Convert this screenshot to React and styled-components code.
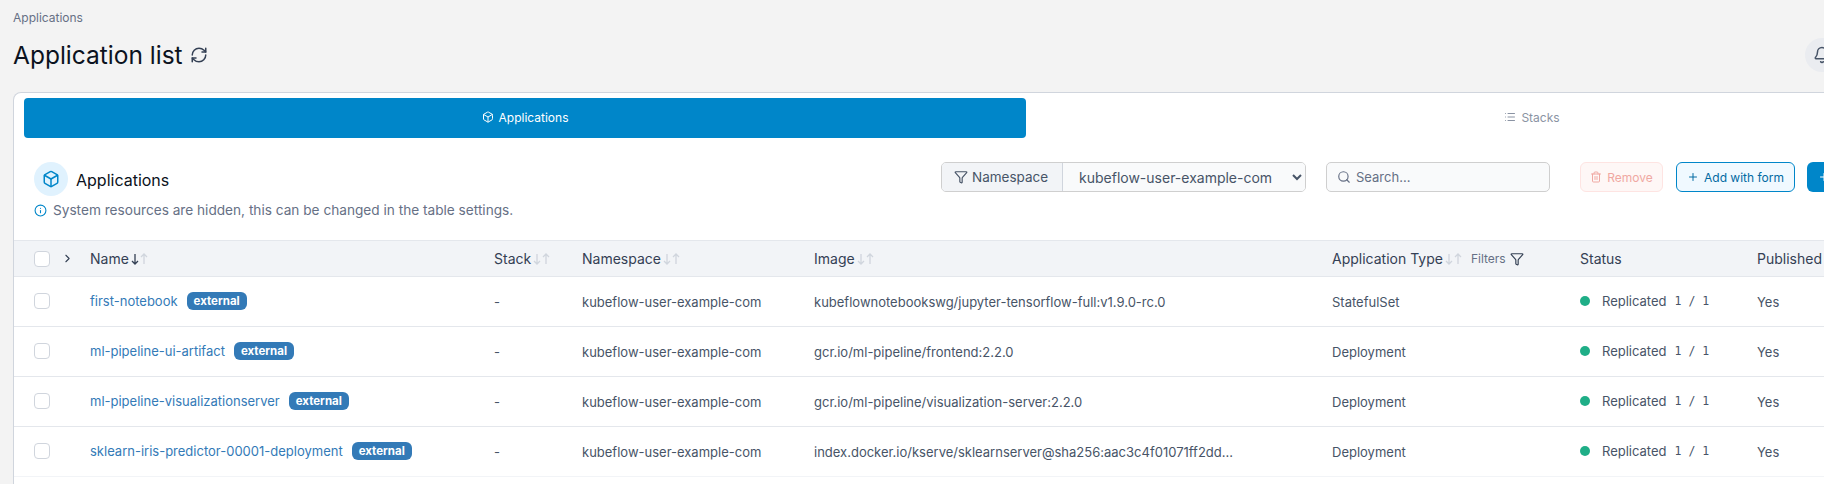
import React from 'react';
import styled, { createGlobalStyle } from 'styled-components';
import {
    Bell, Box, ChevronRight, Filter, Info, List, Plus, RefreshCw, Search, Trash2,
} from 'lucide-react';

const GlobalStyle = createGlobalStyle`
    html, body {
        margin: 0;
        height: 484px;
        overflow: hidden;
        background: #f3f3f3;
        font-family: Inter, "Liberation Sans", sans-serif;
    }
`;

const Page = styled.div`
    width: 2060px;
    height: 484px;
    padding: 10px 0 0 13px;
    box-sizing: border-box;
    overflow: hidden;
`;

const Breadcrumb = styled.div`
    font-size: 12px;
    line-height: 16px;
    color: #667085;
`;

const TitleRow = styled.div`
    display: flex;
    align-items: center;
    height: 34px;
    margin: 12px 0 20px;
`;

const Title = styled.h1`
    flex: 0 0 1792px;
    display: flex;
    align-items: center;
    gap: 7px;
    margin: 0;
    font-size: 24.5px;
    font-weight: 400;
    color: #0b1220;
    svg {
        color: #344054;
    }
`;

const BellButton = styled.div`
    flex: none;
    display: flex;
    align-items: center;
    justify-content: center;
    width: 34px;
    height: 34px;
    border-radius: 50%;
    background: #eaecf0;
    color: #475467;
`;

const Card = styled.div`
    width: 2040px;
    height: 420px;
    box-sizing: border-box;
    background: #fff;
    border: 1px solid #d0d5dd;
    border-bottom: none;
    border-radius: 8px 8px 0 0;
    padding-top: 5px;
`;

const Tabs = styled.div`
    display: flex;
    gap: 5px;
    padding: 0 10px;
`;

const Tab = styled.div`
    flex: 0 0 1002px;
    height: 40px;
    padding-bottom: 2px;
    box-sizing: border-box;
    display: flex;
    align-items: center;
    justify-content: center;
    gap: 5px;
    border-radius: 4px;
    font-size: 12px;
    color: ${({ $active }) => ($active ? '#fff' : '#8a93a3')};
    background: ${({ $active }) => ($active ? '#0086c9' : 'transparent')};
`;

const Toolbar = styled.div`
    display: flex;
    height: 102px;
    padding: 24px 0 0 20px;
    box-sizing: border-box;
`;

const Heading = styled.div`
    flex: 0 0 907px;
`;

const HeadingTitle = styled.div`
    display: flex;
    align-items: center;
    gap: 8px;
    font-size: 16px;
    line-height: 20px;
    color: #0b1220;
`;

const HeadingLabel = styled.span`
    padding-top: 2px;
`;

const IconCircle = styled.div`
    display: flex;
    align-items: center;
    justify-content: center;
    width: 34px;
    height: 34px;
    border-radius: 50%;
    background: #e0f2fe;
    color: #0086c9;
`;

const HeadingNote = styled.div`
    display: flex;
    align-items: center;
    gap: 6px;
    margin-top: 6px;
    font-size: 13.65px;
    line-height: 16px;
    color: #667085;
    svg {
        color: #0086c9;
    }
`;

const Controls = styled.div`
    display: flex;
    align-items: flex-start;
`;

const InputGroup = styled.div`
    display: flex;
    width: 365px;
    height: 30px;
    box-sizing: border-box;
    border: 1px solid #cfcfcf;
    border-radius: 5px;
    overflow: hidden;
    background: #f9fafb;
`;

const GroupAddon = styled.div`
    flex: 0 0 121px;
    display: flex;
    align-items: center;
    gap: 4px;
    padding-left: 12px;
    box-sizing: border-box;
    background: #f2f4f7;
    border-right: 1px solid #d0d5dd;
    font-size: 13.5px;
    color: #475467;
`;

const NamespaceSelect = styled.select`
    flex: 1;
    min-width: 0;
    border: none;
    outline: none;
    padding: 0 8px 0 12px;
    background: #f9fafb;
    font-family: inherit;
    font-size: 14px;
    color: #475467;
`;

const SearchBox = styled.div`
    display: flex;
    align-items: center;
    gap: 5px;
    width: 224px;
    height: 30px;
    margin-left: 20px;
    padding-left: 10px;
    box-sizing: border-box;
    border: 1px solid #cfcfcf;
    border-radius: 5px;
    background: #f9fafb;
    font-size: 13px;
    color: #667085;
`;

const Button = styled.div`
    flex: none;
    display: flex;
    align-items: center;
    justify-content: center;
    gap: 5px;
    height: 30px;
    box-sizing: border-box;
    border-radius: 6px;
    font-size: 12px;
    white-space: nowrap;
`;

const RemoveButton = styled(Button)`
    width: 83px;
    margin-left: 30px;
    border: 1px solid #fee4e2;
    background: #fef7f6;
    color: #f0a8a2;
`;

const AddButton = styled(Button)`
    width: 119px;
    margin-left: 13px;
    border: 1px solid #0086c9;
    background: #f0f9ff;
    color: #026aa2;
`;

const CreateButton = styled(Button)`
    width: 150px;
    margin-left: 12px;
    padding-left: 11px;
    justify-content: flex-start;
    background: #0086c9;
    color: #fff;
`;

const Row = styled.div`
    display: grid;
    grid-template-columns: 27px 29px 404px 88px 232px 518px 248px 177px 1fr;
    align-items: center;
    padding-left: 20px;
    box-sizing: border-box;
    height: ${({ $header }) => ($header ? '37px' : '50px')};
    border-top: ${({ $header }) => ($header ? '1px solid #e4e7ec' : 'none')};
    border-bottom: 1px solid ${({ $last }) => ($last ? '#f2f4f7' : '#e4e7ec')};
    background: ${({ $header }) => ($header ? '#f2f4f7' : '#fff')};
    font-size: 13px;
    color: #475467;
`;

const Checkbox = styled.span`
    display: block;
    width: 16px;
    height: 16px;
    margin-top: ${({ $header }) => ($header ? '0' : '-2px')};
    box-sizing: border-box;
    border: 1px solid #d0d5dd;
    border-radius: 4px;
    background: #fff;
`;

const HeaderCell = styled.div`
    display: flex;
    align-items: center;
    font-size: 14px;
    color: #344054;
`;

const SortArrows = styled.span`
    display: inline-flex;
    gap: 1px;
    margin-left: 2px;
`;

const FiltersLabel = styled.span`
    display: inline-flex;
    align-items: center;
    gap: 4px;
    margin-left: 9px;
    font-size: 12px;
    color: #667085;
    svg {
        color: #344054;
    }
`;

const NameCell = styled.div`
    display: flex;
    align-items: center;
    gap: 9px;
    margin-top: -2px;
`;

const AppLink = styled.span`
    color: #337ab7;
`;

const ExternalBadge = styled.span`
    padding: 0 7px;
    height: 18px;
    line-height: 18px;
    border-radius: 6px;
    background: #337ab7;
    color: #fff;
    font-size: 11.5px;
    font-weight: 700;
`;

const StatusCell = styled.div`
    display: flex;
    align-items: center;
    gap: 12px;
    margin-top: -2px;
`;

const StatusDot = styled.span`
    width: 10px;
    height: 10px;
    border-radius: 50%;
    background: #1fae87;
`;

const Replicas = styled.span`
    margin-left: -4px;
    font-family: "DejaVu Sans Mono", "Liberation Mono", monospace;
    font-size: 11.5px;
    white-space: pre;
`;

const applications = [
    { name: 'first-notebook', image: 'kubeflownotebookswg/jupyter-tensorflow-full:v1.9.0-rc.0', type: 'StatefulSet' },
    { name: 'ml-pipeline-ui-artifact', image: 'gcr.io/ml-pipeline/frontend:2.2.0', type: 'Deployment' },
    { name: 'ml-pipeline-visualizationserver', image: 'gcr.io/ml-pipeline/visualization-server:2.2.0', type: 'Deployment' },
    { name: 'sklearn-iris-predictor-00001-deployment', image: 'index.docker.io/kserve/sklearnserver@sha256:aac3c4f01071ff2dd...', type: 'Deployment' },
];

// Narrow sort arrows, lucide's are too wide for their height here
function SortArrow({ up, color }) {
    return (
        <svg width="8" height="12" viewBox="0 0 8 12" fill="none" stroke={color} strokeWidth="1.3">
            <path d={up ? 'M4 11V1M1 4l3-3 3 3' : 'M4 1v10M1 8l3 3 3-3'} />
        </svg>
    );
}

function Sort({ active }) {
    return (
        <SortArrows>
            <SortArrow color={active ? '#344054' : '#d0d5dd'} />
            <SortArrow up color="#d0d5dd" />
        </SortArrows>
    );
}

export default function App() {
    return (
        <Page>
            <GlobalStyle />
            <Breadcrumb>Applications</Breadcrumb>
            <TitleRow>
                <Title>
                    Application list
                    <RefreshCw size={18} />
                </Title>
                <BellButton>
                    <Bell size={18} />
                </BellButton>
            </TitleRow>
            <Card>
                <Tabs>
                    <Tab $active>
                        <Box size={12} />
                        Applications
                    </Tab>
                    <Tab>
                        <List size={12} />
                        Stacks
                    </Tab>
                </Tabs>
                <Toolbar>
                    <Heading>
                        <HeadingTitle>
                            <IconCircle>
                                <Box size={18} />
                            </IconCircle>
                            <HeadingLabel>Applications</HeadingLabel>
                        </HeadingTitle>
                        <HeadingNote>
                            <Info size={13} />
                            System resources are hidden, this can be changed in the table settings.
                        </HeadingNote>
                    </Heading>
                    <Controls>
                        <InputGroup>
                            <GroupAddon>
                                <Filter size={14} />
                                Namespace
                            </GroupAddon>
                            <NamespaceSelect defaultValue="kubeflow-user-example-com">
                                <option>kubeflow-user-example-com</option>
                            </NamespaceSelect>
                        </InputGroup>
                        <SearchBox>
                            <Search size={14} />
                            Search...
                        </SearchBox>
                        <RemoveButton>
                            <Trash2 size={12} />
                            Remove
                        </RemoveButton>
                        <AddButton>
                            <Plus size={12} />
                            Add with form
                        </AddButton>
                        <CreateButton>
                            <Plus size={12} />
                        </CreateButton>
                    </Controls>
                </Toolbar>
                <Row $header>
                    <Checkbox $header />
                    <ChevronRight size={13} color="#344054" />
                    <HeaderCell>Name<Sort active /></HeaderCell>
                    <HeaderCell>Stack<Sort /></HeaderCell>
                    <HeaderCell>Namespace<Sort /></HeaderCell>
                    <HeaderCell>Image<Sort /></HeaderCell>
                    <HeaderCell>
                        Application Type<Sort />
                        <FiltersLabel>Filters <Filter size={14} /></FiltersLabel>
                    </HeaderCell>
                    <HeaderCell>Status</HeaderCell>
                    <HeaderCell>Published</HeaderCell>
                </Row>
                {applications.map((app, index) => (
                    <Row key={app.name} $last={index === applications.length - 1}>
                        <Checkbox />
                        <span />
                        <NameCell>
                            <AppLink>{app.name}</AppLink>
                            <ExternalBadge>external</ExternalBadge>
                        </NameCell>
                        <div>-</div>
                        <div>kubeflow-user-example-com</div>
                        <div>{app.image}</div>
                        <div>{app.type}</div>
                        <StatusCell>
                            <StatusDot />
                            Replicated
                            <Replicas>1 / 1</Replicas>
                        </StatusCell>
                        <div>Yes</div>
                    </Row>
                ))}
            </Card>
        </Page>
    );
}
